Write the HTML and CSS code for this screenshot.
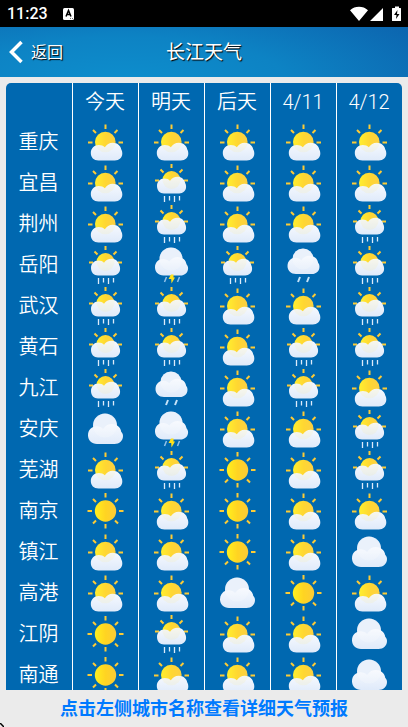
FILE: index.html
```html
<!DOCTYPE html>
<html lang="zh-CN">
<head>
	<meta charset="utf-8">
	<meta name="viewport" content="width=device-width, initial-scale=1">
	<title>长江天气</title>
	<link rel="stylesheet" href="styles.css">
</head>
<body>
	<svg class="defs" aria-hidden="true">
		<defs>
			<linearGradient id="sunFill">
				<stop offset="0" stop-color="#fff01e"/>
				<stop offset="0.5" stop-color="#ffd422"/>
				<stop offset="1" stop-color="#fccb36"/>
			</linearGradient>
			<linearGradient id="cloudFill" x1="0" y1="0" x2="0" y2="1">
				<stop offset="0" stop-color="#f6f9fe"/>
				<stop offset="1" stop-color="#dfeafa"/>
			</linearGradient>
		</defs>
		<symbol id="sunny" viewBox="0 0 40 40">
			<path class="rays" d="M20.500 3v4.500M20.500 34v4.500M2.500 21H7M34 21h4.500M8 9l3 3M30 12l3-3M8 33.500l3-3M30 30.500l3 3"/>
			<circle cx="20.500" cy="21" r="10.700" fill="url(#sunFill)"/>
		</symbol>
		<symbol id="partly" viewBox="0 0 40 40">
			<path class="rays" d="M20.500 3.500V8M3 21.500h4.500M33.500 21.500H38M8 9l3 3M29.500 12l3-3"/>
			<circle cx="20.300" cy="21" r="10.300" fill="url(#sunFill)"/>
			<path fill="url(#cloudFill)" d="M13.500 39.500c-4.700 0-7.700-3-7.700-7.500s3.500-8 8-8c2.500 0 4.500.8 6 2.300 1.800-2.800 4.500-4.600 8-4.600 4.500 0 7.800 2.800 8.500 6.800.8 1.200 1 2.500 1 4 0 4-3 7-7.500 7z"/>
			<circle cx="20.300" cy="21" r="10.300" fill="#ffe98a" opacity=".15"/>
		</symbol>
		<symbol id="sunrain" viewBox="0 0 40 40">
			<path class="rays" d="M20.500 2v4M4 18.500h4M33 18.500h4M9.500 7.500l3 3M28.500 10.500l3-3"/>
			<circle cx="20.500" cy="18" r="9" fill="url(#sunFill)"/>
			<path fill="url(#cloudFill)" d="M13 31.500c-4.200 0-7-3-7-7.500 0-4.200 3-7.500 7.500-7.500 2.200 0 4.200.8 5.500 2.300 1.700-2.600 4.300-4 7.500-4 4 0 7 2.700 7.700 6.200.6 1.200.9 2.500.9 3.800 0 3.900-2.900 6.700-7 6.700z"/>
			<circle cx="20.500" cy="18" r="9" fill="#ffe98a" opacity=".15"/>
			<path class="rain" d="M13.500 34v6M18.500 34v4.500M23.500 34v6M28.500 34v4.500"/>
		</symbol>
		<symbol id="cloudy" viewBox="0 0 40 40">
			<circle cx="20" cy="17.500" r="12" fill="#e5eefb"/>
			<path fill="url(#cloudFill)" d="M12 36c-5.300 0-9-3.500-9-8.700 0-5.300 3.800-9 8.600-9 2.600 0 4.900.9 6.500 2.700 2-3.100 5-5 8.800-5 4.900 0 8.600 3.200 9.300 7.700 1.200 1.200 1.800 2.700 1.800 4.300 0 4.700-3.500 8-8.500 8z"/>
			<circle cx="20" cy="17.500" r="12" fill="#fff" opacity=".2"/>
		</symbol>
		<symbol id="shower" viewBox="0 0 40 40">
			<circle cx="20" cy="15" r="10.500" fill="#e5eefb"/>
			<path fill="url(#cloudFill)" d="M13 30c-5 0-8.500-3.300-8.500-8 0-4.900 3.600-8.200 8-8.200 2.500 0 4.300.9 5.800 2.500 1.800-2.900 4.700-4.500 8.200-4.500 4.700 0 8.100 3 8.700 7.200 1 1.100 1.300 2.200 1.300 3.700 0 4.300-3.200 7.300-7.800 7.300z"/>
			<circle cx="20" cy="15" r="10.500" fill="#fff" opacity=".2"/>
			<path class="drops" d="M17 33l-2 5M26 33l-2 5"/>
		</symbol>
		<symbol id="storm" viewBox="0 0 40 40">
			<circle cx="20" cy="15" r="11.500" fill="#e5eefb"/>
			<path fill="url(#cloudFill)" d="M12.500 31.500C7.300 31.500 4 28 4 23.300 4 18.500 7.600 15 12.200 15c2.500 0 4.600.9 6.100 2.600 1.900-3 4.900-4.700 8.400-4.700 4.700 0 8.200 3 8.800 7.300 1.100 1.200 1.600 2.500 1.600 4 0 4.300-3.300 7.300-8 7.300z"/>
			<circle cx="20" cy="15" r="11.500" fill="#fff" opacity=".2"/>
			<path class="drizzle" d="M15.500 33l-2 5M28.500 33l-2 5"/>
			<path fill="#ffe21a" d="M20 30.500h2.500v3h1.500L20.500 39.500l-.3-4.500h-2.700z"/>
		</symbol>
	</svg>

	<div class="statusbar">
		<span class="clock">11:23</span>
		<svg class="ime" width="12" height="12" viewBox="0 0 12 12"><rect width="11" height="12" rx="1.500" fill="#fff"/><path d="M3 8.500L5.500 2.500 8 8.500M4 6.500h3" fill="none" stroke="#000" stroke-width="1.500"/><path d="M7 10.500h1M9 10.500h1" stroke="#777"/></svg>
		<svg class="signals" width="52" height="16" viewBox="0 0 52 16">
			<path fill="#fff" d="M0 4.200C5-.3 13-.3 18 4.200L9 15zM20 15L33 2v13z"/>
			<path fill="#fff" d="M43 2h2V.5h4V2h1.500q.5 0 .5.500v12q0 .5-.5.500h-8q-.5 0-.5-.5V2.500q0-.5.5-.5z"/>
			<path d="M47.500 4L44 9h2.500l-.5 4 3.500-5H47z"/>
		</svg>
	</div>

	<header class="navbar">
		<button class="back" type="button">
			<svg width="14" height="24" viewBox="0 0 14 24"><path d="M12.500 2L2.500 12l10 10" fill="none" stroke="#fff" stroke-width="3.500"/></svg>
			<span>返回</span>
		</button>
		<h1>长江天气</h1>
	</header>

	<main class="content">
		<table class="forecast">
			<thead>
				<tr><th></th><th>今天</th><th>明天</th><th>后天</th><th>4/11</th><th>4/12</th></tr>
			</thead>
			<tbody id="rows"></tbody>
		</table>
	</main>

	<footer class="hint">点击左侧城市名称查看详细天气预报</footer>
	<svg class="corner" width="4" height="4" viewBox="0 0 4 4" aria-hidden="true"><path d="M0 0l4 4" fill="none" stroke="#000" stroke-width="1.500"/></svg>

	<script src="weather.js"></script>
</body>
</html>
```
FILE: styles.css
```css
* {
	box-sizing: border-box;
}
body {
	display: flex;
	flex-direction: column;
	height: 100vh;
	margin: 0;
	background: #ebebeb;
	font-family: Roboto, "Noto Sans CJK SC", sans-serif;
}
.defs {
	position: absolute;
	width: 0;
	height: 0;
}
.statusbar {
	display: flex;
	flex: none;
	align-items: center;
	height: 27px;
	padding: 0 6px 0 7px;
	background: #000;
	color: #fff;
}
.clock {
	font-size: 16px;
	font-weight: 500;
}
.ime {
	margin-left: 15px;
}
.signals {
	margin-left: auto;
}
.navbar {
	display: grid;
	grid-template-columns: 1fr auto 1fr;
	flex: none;
	align-items: center;
	height: 50px;
	background: radial-gradient(ellipse 90% 200% at 30% 110%, #0d8ecd 0%, #0d83c4 45%, #0c62ad 100%);
	color: #fff;
	text-shadow: 1px 1px 1px #000;
}
.navbar h1 {
	margin: 0;
	padding-bottom: 3px;
	font-size: 19px;
	font-weight: 400;
}
.back {
	display: flex;
	align-items: center;
	gap: 8px;
	padding: 0 9px;
	border: 0;
	background: none;
	color: inherit;
	font: inherit;
	font-size: 16px;
	text-shadow: inherit;
	cursor: pointer;
}
.back span {
	padding-bottom: 3px;
}
.content {
	flex: 1;
	min-height: 0;
	margin: 6px 6px 0;
	overflow-y: auto;
	scrollbar-width: none;
	border-radius: 5px 5px 0 0;
}
.forecast {
	width: 100%;
	table-layout: fixed;
	border-spacing: 0;
	background: #0068b0;
	color: #fff;
}
.forecast th,
.forecast td {
	height: 41px;
	padding: 0 1px 0 0;
	border-left: 1px solid #fff;
	font-size: 20px;
	font-weight: 350;
	line-height: 24px;
	text-align: center;
}
.forecast td {
	vertical-align: top;
}
.forecast thead th {
	height: 38px;
}
.forecast tr > :first-child {
	border-left: 0;
}
.city {
	padding: 0;
	border: 0;
	background: none;
	color: inherit;
	font: inherit;
	cursor: pointer;
}
.icon {
	display: block;
	width: 40px;
	height: 40px;
	margin: 0 auto;
}
.rays {
	fill: none;
	stroke: #fccb36;
	stroke-width: 2;
}
.rain {
	stroke: #dcebfa;
	stroke-width: 1.3;
}
.drops {
	stroke: #c5e2f8;
	stroke-width: 2;
}
.drizzle {
	stroke: #8fc0e8;
	stroke-width: 1.5;
}
.hint {
	flex: none;
	height: 37px;
	color: #007aff;
	font-size: 18px;
	font-weight: 700;
	line-height: 37px;
	text-align: center;
}
.corner {
	position: fixed;
	bottom: 0;
	left: 0;
}
```
FILE: weather.js
```javascript
const names = {
	sunny: '晴',
	partly: '多云',
	sunrain: '阵雨',
	cloudy: '阴',
	shower: '小雨',
	storm: '雷阵雨'
};

const cities = [
	['重庆', 'partly', 'partly', 'partly', 'partly', 'partly'],
	['宜昌', 'partly', 'sunrain', 'partly', 'partly', 'partly'],
	['荆州', 'partly', 'sunrain', 'partly', 'partly', 'sunrain'],
	['岳阳', 'sunrain', 'storm', 'sunrain', 'shower', 'sunrain'],
	['武汉', 'sunrain', 'sunrain', 'partly', 'partly', 'sunrain'],
	['黄石', 'sunrain', 'sunrain', 'partly', 'sunrain', 'sunrain'],
	['九江', 'sunrain', 'shower', 'partly', 'sunrain', 'partly'],
	['安庆', 'cloudy', 'storm', 'partly', 'partly', 'sunrain'],
	['芜湖', 'partly', 'sunrain', 'sunny', 'partly', 'sunrain'],
	['南京', 'sunny', 'partly', 'sunny', 'partly', 'partly'],
	['镇江', 'partly', 'partly', 'sunny', 'partly', 'cloudy'],
	['高港', 'partly', 'partly', 'cloudy', 'sunny', 'partly'],
	['江阴', 'sunny', 'sunrain', 'partly', 'partly', 'cloudy'],
	['南通', 'sunny', 'partly', 'partly', 'partly', 'cloudy']
];

document.getElementById('rows').innerHTML = cities.map(function (row) {
	const cells = row.slice(1).map(function (type) {
		return '<td><svg class="icon" role="img" aria-label="' + names[type] + '"><use href="#' + type + '"/></svg></td>';
	});
	return '<tr><th scope="row"><button class="city" type="button">' + row[0] + '</button></th>' + cells.join('') + '</tr>';
}).join('');
```
